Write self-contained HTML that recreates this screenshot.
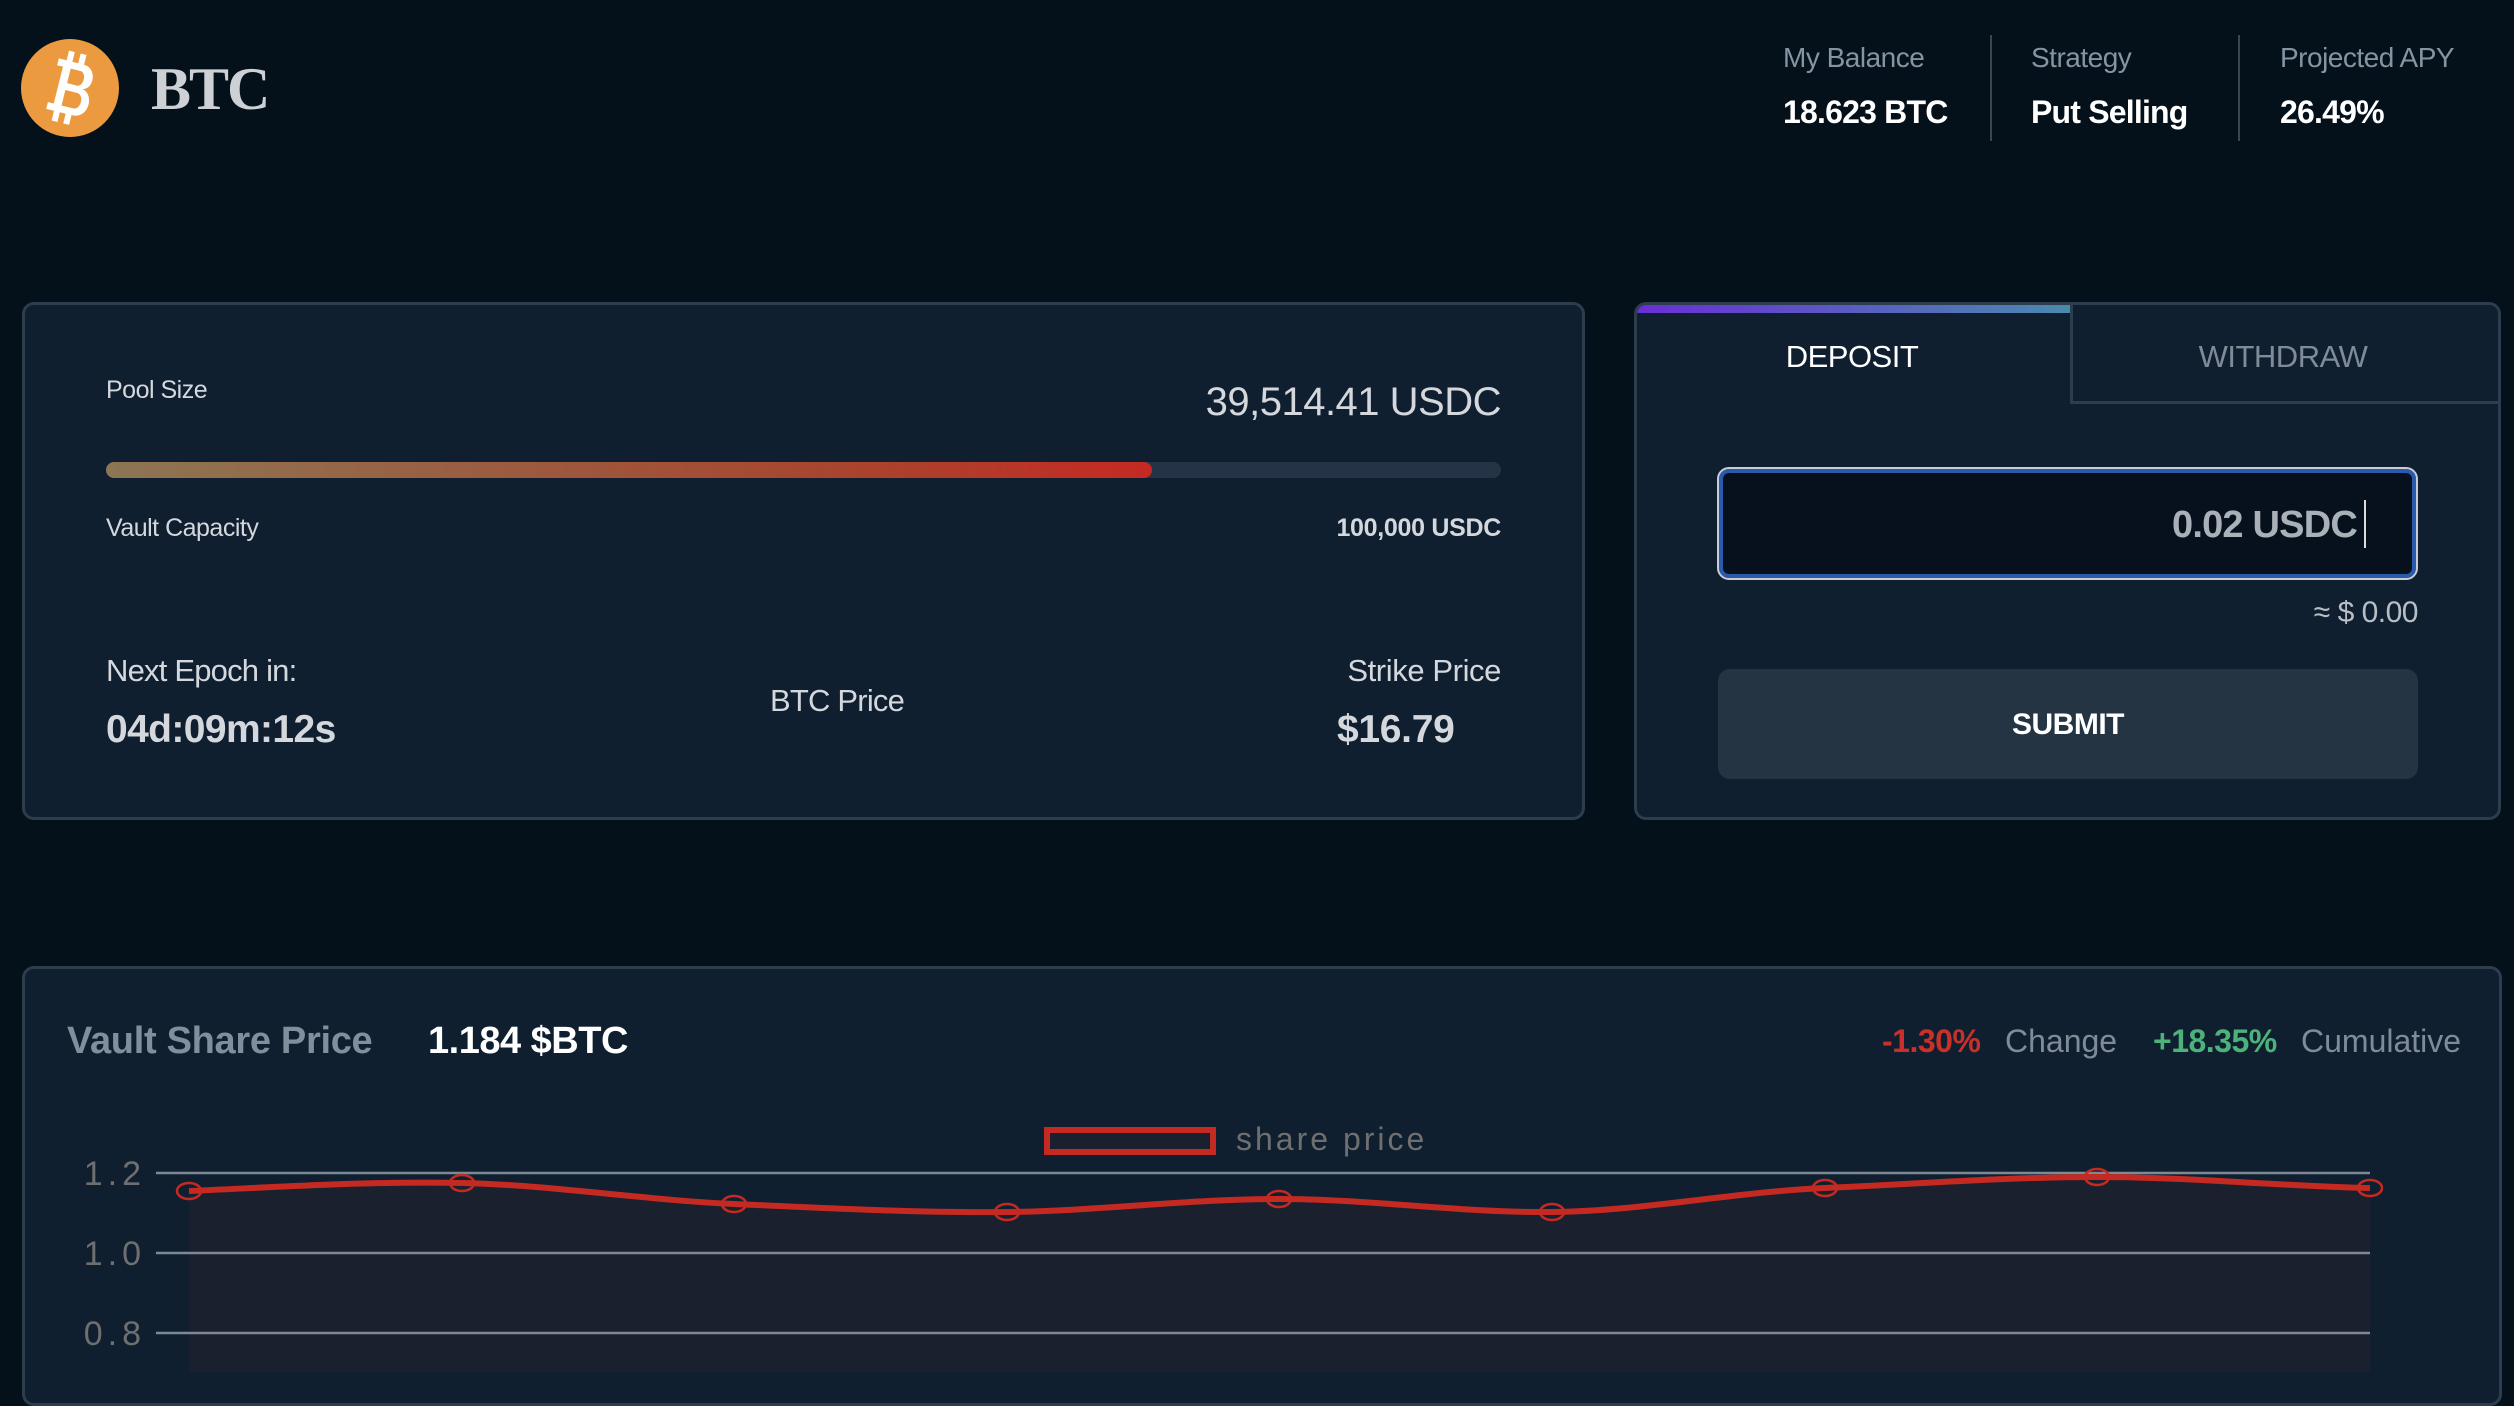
<!DOCTYPE html>
<html><head><meta charset="utf-8">
<style>
*{margin:0;padding:0;box-sizing:border-box}
html,body{width:2514px;height:1372px;overflow:hidden;background:#04101a;font-family:"Liberation Sans",sans-serif;color:#d4d8dd}
.a{position:absolute;white-space:nowrap;line-height:1}
.card{position:absolute;background:#0f1f30;border:3px solid #2c3d4e;border-radius:12px}
.r{text-align:right}
</style></head><body>
<svg class="a" style="left:20px;top:38px" width="100" height="100" viewBox="0 0 100 100">
<circle cx="50" cy="50" r="49" fill="#eb9a3f"/>
<g transform="rotate(14 50 50)" fill="#fff">
<rect x="40" y="14" width="6" height="12"/><rect x="52" y="14" width="6" height="12"/>
<rect x="40" y="74" width="6" height="12"/><rect x="52" y="74" width="6" height="12"/>
<path d="M32 24 H58 C72 24 74 46 62 48 C76 50 76 76 58 76 H32 V69 H38 V31 H32 Z M46 31 V46 H56 C63 46 63 31 56 31 Z M46 53 V69 H58 C66 69 66 53 58 53 Z" fill-rule="evenodd"/>
</g>
</svg>
<div class="a" style="left:151px;top:59px;font-family:'Liberation Serif',serif;font-weight:bold;font-size:60px;letter-spacing:-2px;color:#cdd1d5">BTC</div>

<div class="a" style="left:1783px;top:44px;font-size:28px;color:#8494a2;letter-spacing:-0.5px">My Balance</div>
<div class="a" style="left:1783px;top:96px;font-size:32px;font-weight:bold;color:#fff;letter-spacing:-0.8px">18.623 BTC</div>
<div class="a" style="left:1990px;top:35px;width:2px;height:106px;background:#3a4652"></div>
<div class="a" style="left:2031px;top:44px;font-size:28px;color:#8494a2;letter-spacing:-0.5px">Strategy</div>
<div class="a" style="left:2031px;top:96px;font-size:32px;font-weight:bold;color:#fff;letter-spacing:-0.8px">Put Selling</div>
<div class="a" style="left:2238px;top:35px;width:2px;height:106px;background:#3a4652"></div>
<div class="a" style="left:2280px;top:44px;font-size:28px;color:#8494a2;letter-spacing:-0.5px">Projected APY</div>
<div class="a" style="left:2280px;top:96px;font-size:32px;font-weight:bold;color:#fff;letter-spacing:-0.8px">26.49%</div>

<div class="card" style="left:22px;top:302px;width:1563px;height:518px"></div>
<div class="a" style="left:106px;top:378px;font-size:25px;letter-spacing:-0.5px">Pool Size</div>
<div class="a r" style="left:0;width:1501px;top:382px;font-size:40px;letter-spacing:-0.5px">39,514.41 USDC</div>
<div class="a" style="left:106px;top:462px;width:1395px;height:16px;border-radius:8px;background:#243446"></div>
<div class="a" style="left:106px;top:462px;width:1046px;height:16px;border-radius:8px;background:linear-gradient(90deg,#8c7654,#a8452f 70%,#c42a22)"></div>
<div class="a" style="left:106px;top:516px;font-size:25px;letter-spacing:-0.5px">Vault Capacity</div>
<div class="a r" style="left:0;width:1501px;top:516px;font-size:25px;font-weight:bold;letter-spacing:-0.3px">100,000 USDC</div>
<div class="a" style="left:106px;top:655px;font-size:31px;letter-spacing:-0.8px">Next Epoch in:</div>
<div class="a" style="left:106px;top:710px;font-size:39px;font-weight:bold;letter-spacing:-0.6px">04d:09m:12s</div>
<div class="a" style="left:770px;top:685px;font-size:31px;letter-spacing:-0.8px">BTC Price</div>
<div class="a r" style="left:0;width:1501px;top:655px;font-size:31px;letter-spacing:-0.4px">Strike Price</div>
<div class="a" style="left:1337px;top:710px;font-size:39px;font-weight:bold;letter-spacing:-0.3px">$16.79</div>

<div class="card" style="left:1634px;top:302px;width:867px;height:518px;overflow:hidden">
  <div style="position:absolute;left:0;top:0;width:433px;height:8px;background:linear-gradient(90deg,#6a2fd6,#4a8aae)"></div>
  <div style="position:absolute;left:433px;top:0;width:440px;height:99px;border-left:3px solid #2c3d4e;border-bottom:3px solid #2c3d4e;background:#0f1f30"></div>
</div>
<div class="a" style="left:1634px;width:436px;text-align:center;top:341px;font-size:31px;color:#fff;letter-spacing:-0.5px">DEPOSIT</div>
<div class="a" style="left:2068px;width:430px;text-align:center;top:341px;font-size:31px;color:#7f8c98;letter-spacing:-0.5px">WITHDRAW</div>
<div class="a" style="left:1717px;top:467px;width:701px;height:113px;border-radius:12px;border:2px solid #c9ccd2;background:#06111d;box-shadow:inset 0 0 0 4px #2a5aac"></div>
<div class="a r" style="left:0;width:2357px;top:506px;font-size:38px;font-weight:bold;color:#a9b0b8;letter-spacing:-0.8px">0.02 USDC</div>
<div class="a" style="left:2364px;top:500px;width:2px;height:48px;background:#ddd"></div>
<div class="a r" style="left:0;width:2418px;top:598px;font-size:30px;color:#b8bec6;letter-spacing:-0.5px">≈ $ 0.00</div>
<div class="a" style="left:1718px;top:669px;width:700px;height:110px;border-radius:12px;background:#243443"></div>
<div class="a" style="left:1718px;width:700px;text-align:center;top:710px;font-size:30px;font-weight:bold;color:#fff;letter-spacing:-0.5px">SUBMIT</div>

<div class="card" style="left:22px;top:966px;width:2480px;height:440px"></div>
<div class="a" style="left:67px;top:1022px;font-size:38px;font-weight:bold;color:#7f8f9c;letter-spacing:-0.3px">Vault Share Price</div>
<div class="a" style="left:428px;top:1022px;font-size:38px;font-weight:bold;color:#fff;letter-spacing:-0.5px">1.184 $BTC</div>
<div class="a" style="left:1882px;top:1025px;font-size:32px;font-weight:bold;color:#c9302a;letter-spacing:-0.5px">-1.30%</div>
<div class="a" style="left:2005px;top:1025px;font-size:32px;color:#7f8c98">Change</div>
<div class="a" style="left:2153px;top:1025px;font-size:32px;font-weight:bold;color:#4cb27a;letter-spacing:-0.5px">+18.35%</div>
<div class="a" style="left:2301px;top:1025px;font-size:32px;color:#7f8c98">Cumulative</div>

<svg class="a" style="left:0;top:0" width="2514" height="1372" viewBox="0 0 2514 1372">
<path d="M189 1191 C280 1187 371 1181 462 1183 S643 1200 734 1204 S916 1213 1007 1212 S1188 1199 1279 1199 S1461 1213 1552 1212 S1734 1192 1825 1188 S2006 1177 2097 1177 S2279 1186 2370 1188 L2370 1372 L189 1372 Z" fill="#1a202e"/>
<g stroke="#7d8a96" stroke-width="2.5">
<line x1="156" y1="1173" x2="2370" y2="1173"/>
<line x1="156" y1="1253" x2="2370" y2="1253"/>
<line x1="156" y1="1333" x2="2370" y2="1333"/>
</g>
<g font-family="Liberation Sans,sans-serif" font-size="34" fill="#6f6f6f" text-anchor="end" letter-spacing="5">
<text x="146" y="1185">1.2</text><text x="146" y="1265">1.0</text><text x="146" y="1345">0.8</text>
</g>
<rect x="1047" y="1130" width="166" height="22" fill="#1a202e" stroke="#c42a22" stroke-width="6"/>
<text x="1236" y="1150" font-family="Liberation Sans,sans-serif" font-size="32" fill="#6f6f6f" letter-spacing="3">share price</text>
<path d="M189 1191 C280 1187 371 1181 462 1183 S643 1200 734 1204 S916 1213 1007 1212 S1188 1199 1279 1199 S1461 1213 1552 1212 S1734 1192 1825 1188 S2006 1177 2097 1177 S2279 1186 2370 1188" fill="none" stroke="#c42a22" stroke-width="6"/>
<g fill="none" stroke="#c42a22" stroke-width="2.5">
<ellipse cx="189" cy="1191" rx="12" ry="8"/><ellipse cx="462" cy="1183" rx="12" ry="8"/><ellipse cx="734" cy="1204" rx="12" ry="8"/><ellipse cx="1007" cy="1212" rx="12" ry="8"/><ellipse cx="1279" cy="1199" rx="12" ry="8"/><ellipse cx="1552" cy="1212" rx="12" ry="8"/><ellipse cx="1825" cy="1188" rx="12" ry="8"/><ellipse cx="2097" cy="1177" rx="12" ry="8"/><ellipse cx="2370" cy="1188" rx="12" ry="8"/>
</g>
</svg>
</body></html>
